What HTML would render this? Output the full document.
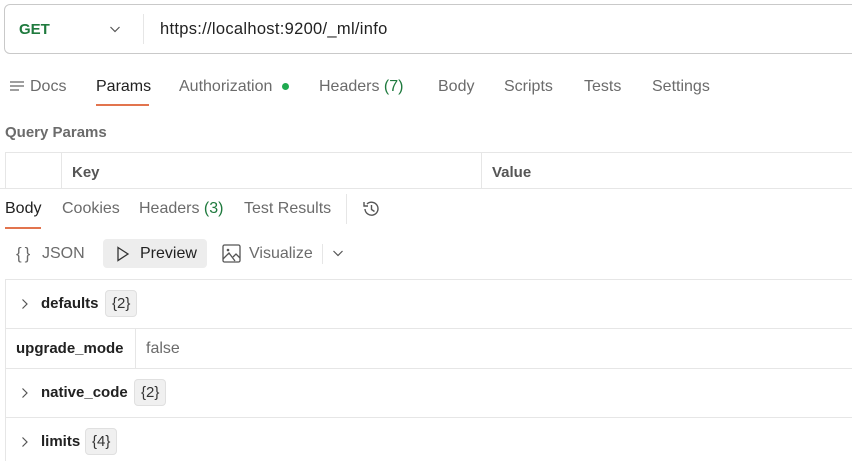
<!DOCTYPE html>
<html><head><style>
*{margin:0;padding:0;box-sizing:border-box}
body{width:852px;height:461px;overflow:hidden;background:#fff;font-family:"Liberation Sans",sans-serif;font-size:16px;color:#212121;position:relative}
.a{position:absolute;white-space:nowrap}
.g{color:#6b6b6b}
.hl{position:absolute;background:#e6e6e6;height:1px}
.vl{position:absolute;background:#e6e6e6;width:1px}
.b{font-weight:bold;font-size:15px}
.badge{position:absolute;background:#f0f0f0;border:1px solid #e0e0e0;border-radius:4px;font-size:15px;padding:4px 6px;color:#333;line-height:17px}
</style></head><body>
<div class="a" style="left:4px;top:4px;width:860px;height:50px;border:1px solid #c9c9c9;border-radius:6px"></div>
<div class="a" style="left:19px;top:21px;color:#1f7a3e;font-size:15px;font-weight:bold">GET</div>
<svg class="a" style="left:109px;top:25px" width="12" height="10"><path d="M1.5 2l4.5 4.5 4.5-4.5" stroke="#555" stroke-width="1.2" fill="none"/></svg>
<div class="vl" style="left:143px;top:14px;height:30px"></div>
<div class="a" style="left:160px;top:20px;color:#222;font-size:16.5px;letter-spacing:0.3px">https://localhost:9200/_ml/info</div>

<svg class="a" style="left:10px;top:81px" width="16" height="12"><path d="M0 1h14M0 5h14M0 9h9" stroke="#666" stroke-width="1.3"/></svg>
<div class="a g" style="left:30px;top:78px">Docs</div>
<div class="a" style="left:96px;top:78px">Params</div>
<div class="a" style="left:96px;top:104px;width:53px;height:2px;background:#e2744e"></div>
<div class="a g" style="left:179px;top:78px">Authorization</div>
<div class="a" style="left:282px;top:83px;width:7px;height:7px;border-radius:50%;background:#1faa50"></div>
<div class="a g" style="left:319px;top:78px">Headers <span style="color:#1f7a3e">(7)</span></div>
<div class="a g" style="left:438px;top:78px">Body</div>
<div class="a g" style="left:504px;top:78px">Scripts</div>
<div class="a g" style="left:584px;top:78px">Tests</div>
<div class="a g" style="left:652px;top:78px">Settings</div>

<div class="a" style="left:5px;top:124px;color:#6b6b6b;font-size:15px;font-weight:bold">Query Params</div>
<div class="hl" style="left:5px;top:152px;width:847px"></div>
<div class="vl" style="left:5px;top:152px;height:36px"></div>
<div class="vl" style="left:61px;top:152px;height:36px"></div>
<div class="vl" style="left:481px;top:152px;height:36px"></div>
<div class="a" style="left:72px;top:164px;color:#555;font-size:15px;font-weight:bold">Key</div>
<div class="a" style="left:492px;top:164px;color:#555;font-size:15px;font-weight:bold">Value</div>
<div class="hl" style="left:0;top:188px;width:852px"></div>

<div class="a" style="left:5px;top:200px">Body</div>
<div class="a" style="left:5px;top:227px;width:36px;height:2px;background:#e2744e"></div>
<div class="a g" style="left:62px;top:200px">Cookies</div>
<div class="a g" style="left:139px;top:200px">Headers <span style="color:#1f7a3e">(3)</span></div>
<div class="a g" style="left:244px;top:200px">Test Results</div>
<div class="vl" style="left:346px;top:194px;height:30px"></div>
<svg class="a" style="left:361px;top:199px" width="20" height="20"><path d="M4 10a6.5 6.5 0 1 0 2-5" stroke="#555" stroke-width="1.4" fill="none"/><path d="M3 3v4h4" stroke="#555" stroke-width="1.4" fill="none"/><path d="M10.5 6v4.5l3 2" stroke="#555" stroke-width="1.4" fill="none"/></svg>

<div class="a g" style="left:16px;top:244px;letter-spacing:3px;font-size:17px">{}</div>
<div class="a g" style="left:42px;top:245px">JSON</div>
<div class="a" style="left:103px;top:239px;width:104px;height:29px;background:#ededed;border-radius:4px"></div>
<svg class="a" style="left:116px;top:246px" width="14" height="16"><path d="M2 1.5l10 6.5-10 6.5z" stroke="#333" stroke-width="1.3" fill="none"/></svg>
<div class="a" style="left:140px;top:245px">Preview</div>
<svg class="a" style="left:222px;top:244px" width="20" height="20"><rect x="1" y="1" width="17" height="17" rx="1.5" stroke="#555" stroke-width="1.3" fill="none"/><path d="M1 15l6-6 6 8M11 13l3-3 4 4" stroke="#555" stroke-width="1.3" fill="none"/><circle cx="6" cy="6" r="1.3" fill="#555"/></svg>
<div class="a g" style="left:249px;top:245px">Visualize</div>
<div class="vl" style="left:322px;top:244px;height:20px"></div>
<svg class="a" style="left:332px;top:249px" width="12" height="10"><path d="M1.5 2l4.5 4.5 4.5-4.5" stroke="#555" stroke-width="1.2" fill="none"/></svg>

<div class="hl" style="left:5px;top:279px;width:847px"></div>
<div class="vl" style="left:5px;top:279px;height:182px"></div>
<svg class="a" style="left:21px;top:298px" width="8" height="12"><path d="M1.5 1.5l4.5 4.5-4.5 4.5" stroke="#555" stroke-width="1.2" fill="none"/></svg>
<div class="a b" style="left:41px;top:295px">defaults</div>
<div class="badge" style="left:105px;top:290px">{2}</div>
<div class="hl" style="left:5px;top:328px;width:847px"></div>
<div class="a b" style="left:16px;top:340px">upgrade_mode</div>
<div class="vl" style="left:135px;top:328px;height:40px"></div>
<div class="a g" style="left:146px;top:340px">false</div>
<div class="hl" style="left:5px;top:368px;width:847px"></div>
<svg class="a" style="left:21px;top:387px" width="8" height="12"><path d="M1.5 1.5l4.5 4.5-4.5 4.5" stroke="#555" stroke-width="1.2" fill="none"/></svg>
<div class="a b" style="left:41px;top:384px">native_code</div>
<div class="badge" style="left:134px;top:379px">{2}</div>
<div class="hl" style="left:5px;top:417px;width:847px"></div>
<svg class="a" style="left:21px;top:436px" width="8" height="12"><path d="M1.5 1.5l4.5 4.5-4.5 4.5" stroke="#555" stroke-width="1.2" fill="none"/></svg>
<div class="a b" style="left:41px;top:433px">limits</div>
<div class="badge" style="left:85px;top:428px">{4}</div>
</body></html>
